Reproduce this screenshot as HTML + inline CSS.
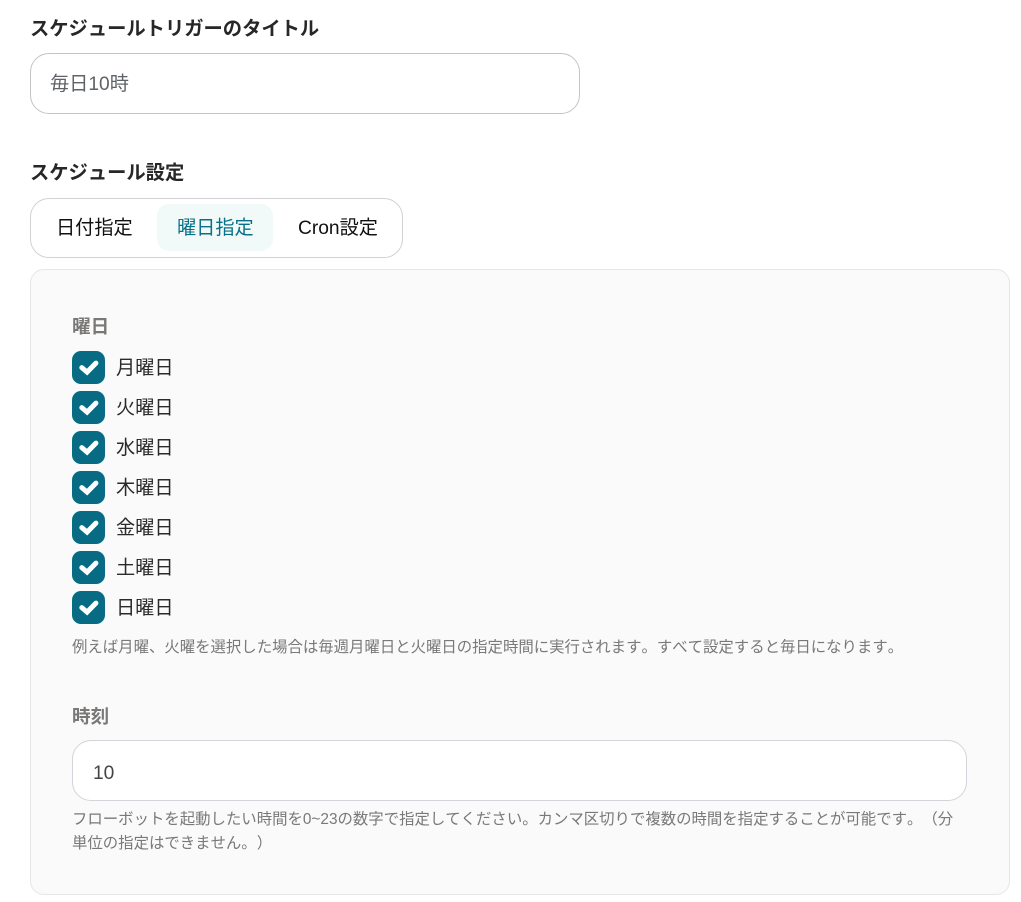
<!DOCTYPE html>
<html lang="ja">
<head>
<meta charset="utf-8">
<style>
html,body{margin:0;padding:0;background:#fff}
body{width:1021px;height:902px;position:relative;overflow:hidden;font-family:"Liberation Sans","Noto Sans CJK JP",sans-serif;color:#222;text-spacing-trim:space-all;font-kerning:none}
.t{position:absolute;white-space:nowrap;line-height:24px}
.h{font-size:19.3px;font-weight:700;color:#282626;left:30px}
.box{position:absolute;box-sizing:border-box;background:#fff}
.lab{font-size:18.6px;font-weight:700;color:#7a7877;left:72px}
.day{font-size:19.2px;color:#2a2a2a;left:116px}
.small{font-size:15.4px;color:#7a7878;left:72px}
.cb{position:absolute;left:72px;width:33px;height:33px;border-radius:9px;background:#076b84}
.cb svg{position:absolute;left:0;top:0}
</style>
</head>
<body>
<div class="t h" style="top:18px">スケジュールトリガーのタイトル</div>
<div class="box" style="left:30px;top:53px;width:550px;height:61px;border:1px solid #c4c3c8;border-radius:19px"></div>
<div class="t" style="left:50px;top:73px;font-size:19.2px;color:#5f6368">毎日10時</div>

<div class="t h" style="top:162px">スケジュール設定</div>
<div class="box" style="left:30px;top:198px;width:373px;height:60px;border:1px solid #d2d1d3;border-radius:19px"></div>
<div class="box" style="left:157px;top:204px;width:116px;height:47px;background:#f1f9f9;border-radius:12px"></div>
<div class="t" style="left:56px;top:217px;font-size:19.2px;color:#111">日付指定</div>
<div class="t" style="left:177px;top:217px;font-size:19.2px;color:#087189">曜日指定</div>
<div class="t" style="left:298px;top:217px;font-size:19.2px;color:#111">Cron設定</div>

<div class="box" style="left:30px;top:269px;width:980px;height:626px;background:#fafafa;border:1px solid #e6e6e8;border-radius:14px"></div>

<div class="t lab" style="top:315px">曜日</div>

<div class="cb" style="top:351px"><svg width="33" height="33" viewBox="0 0 33 33"><path d="M9.800 16.600l5.300 4.500 8.800-9" fill="none" stroke="#fff" stroke-width="5" stroke-linecap="round" stroke-linejoin="miter"/></svg></div>
<div class="t day" style="top:357px">月曜日</div>
<div class="cb" style="top:391px"><svg width="33" height="33" viewBox="0 0 33 33"><path d="M9.800 16.600l5.300 4.500 8.800-9" fill="none" stroke="#fff" stroke-width="5" stroke-linecap="round" stroke-linejoin="miter"/></svg></div>
<div class="t day" style="top:397px">火曜日</div>
<div class="cb" style="top:431px"><svg width="33" height="33" viewBox="0 0 33 33"><path d="M9.800 16.600l5.300 4.500 8.800-9" fill="none" stroke="#fff" stroke-width="5" stroke-linecap="round" stroke-linejoin="miter"/></svg></div>
<div class="t day" style="top:437px">水曜日</div>
<div class="cb" style="top:471px"><svg width="33" height="33" viewBox="0 0 33 33"><path d="M9.800 16.600l5.300 4.500 8.800-9" fill="none" stroke="#fff" stroke-width="5" stroke-linecap="round" stroke-linejoin="miter"/></svg></div>
<div class="t day" style="top:477px">木曜日</div>
<div class="cb" style="top:511px"><svg width="33" height="33" viewBox="0 0 33 33"><path d="M9.800 16.600l5.300 4.500 8.800-9" fill="none" stroke="#fff" stroke-width="5" stroke-linecap="round" stroke-linejoin="miter"/></svg></div>
<div class="t day" style="top:517px">金曜日</div>
<div class="cb" style="top:551px"><svg width="33" height="33" viewBox="0 0 33 33"><path d="M9.800 16.600l5.300 4.500 8.800-9" fill="none" stroke="#fff" stroke-width="5" stroke-linecap="round" stroke-linejoin="miter"/></svg></div>
<div class="t day" style="top:557px">土曜日</div>
<div class="cb" style="top:591px"><svg width="33" height="33" viewBox="0 0 33 33"><path d="M9.800 16.600l5.300 4.500 8.800-9" fill="none" stroke="#fff" stroke-width="5" stroke-linecap="round" stroke-linejoin="miter"/></svg></div>
<div class="t day" style="top:597px">日曜日</div>

<div class="t small" style="top:636px">例えば月曜、火曜を選択した場合は毎週月曜日と火曜日の指定時間に実行されます。すべて設定すると毎日になります。</div>

<div class="t lab" style="top:705px">時刻</div>
<div class="box" style="left:72px;top:740px;width:895px;height:61px;border:1px solid #d2d4da;border-radius:19px"></div>
<div class="t" style="left:93px;top:762px;font-size:19.2px;color:#444">10</div>

<div class="t small" style="top:808px">フローボットを起動したい時間を0~23の数字で指定してください。カンマ区切りで複数の時間を指定することが可能です。（分</div>
<div class="t small" style="top:832px">単位の指定はできません。）</div>
</body>
</html>
